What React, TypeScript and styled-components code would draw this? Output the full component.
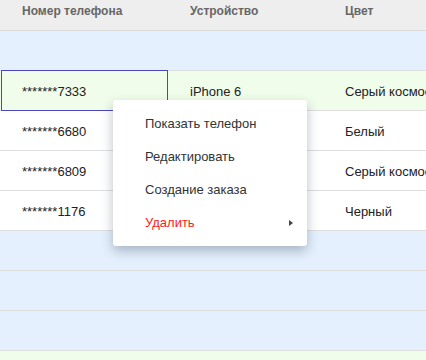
import React from 'react';
import styled, { createGlobalStyle } from 'styled-components';

const GlobalStyle = createGlobalStyle`
  html, body {
    margin: 0;
    padding: 0;
    overflow: hidden;
    background: #fff;
    font-family: "Liberation Sans", Arial, sans-serif;
  }
`;

const Page = styled.div`
  position: relative;
  width: 426px;
  height: 360px;
  overflow: hidden;
`;

const Table = styled.div`
  display: flex;
  flex-direction: column;
  width: 620px;
`;

const HeaderRow = styled.div`
  display: grid;
  grid-template-columns: 168px 155px 1fr;
  height: 30px;
  background: #eeeeee;
  border-bottom: 1px solid #dcdcdc;
`;

const HeaderCell = styled.div`
  padding: 3px 0 0 22px;
  font-size: 12px;
  line-height: 16px;
  font-weight: bold;
  color: #666;
  white-space: nowrap;
`;

const Row = styled.div<{ tone: 'blue' | 'green' | 'white' }>`
  display: grid;
  grid-template-columns: 168px 155px 1fr;
  height: 40px;
  box-sizing: border-box;
  border-bottom: 1px solid #dedede;
  background: ${({ tone }) =>
    tone === 'blue' ? '#e4f0fd' : tone === 'green' ? '#f1fdeb' : '#ffffff'};
`;

const Cell = styled.div<{ selected?: boolean }>`
  display: flex;
  align-items: center;
  padding: 1px 0 0 22px;
  font-size: 13px;
  color: #222;
  white-space: nowrap;
  box-sizing: border-box;
  ${({ selected }) =>
    selected
      ? `
    margin: -1px 0 -1px 1px;
    padding-left: 20px;
    border: 1px solid #4b48bd;
  `
      : ''}
`;

const Menu = styled.div`
  position: absolute;
  left: 113px;
  top: 100px;
  width: 194px;
  padding: 7px 0;
  background: #fff;
  border-radius: 3px;
  box-shadow: 0 5px 12px rgba(40, 55, 80, 0.32);
  display: flex;
  flex-direction: column;
`;

const MenuItem = styled.div<{ danger?: boolean }>`
  display: flex;
  align-items: center;
  justify-content: space-between;
  height: 33px;
  padding: 0 14px 0 32px;
  font-size: 13px;
  color: ${({ danger }) => (danger ? '#ff1a1a' : '#333')};
  cursor: pointer;
`;

const Arrow = styled.span`
  width: 0;
  height: 0;
  border-top: 3.5px solid transparent;
  border-bottom: 3.5px solid transparent;
  border-left: 4px solid #444;
`;

type Tone = 'blue' | 'green' | 'white';

const rows: { tone: Tone; phone?: string; device?: string; color?: string; selected?: boolean }[] = [
  { tone: 'blue' },
  { tone: 'green', phone: '*******7333', device: 'iPhone 6', color: 'Серый космос', selected: true },
  { tone: 'white', phone: '*******6680', device: 'iPhone 6', color: 'Белый' },
  { tone: 'white', phone: '*******6809', device: 'iPhone 6', color: 'Серый космос' },
  { tone: 'white', phone: '*******1176', device: 'iPhone 6', color: 'Черный' },
  { tone: 'blue' },
  { tone: 'blue' },
  { tone: 'blue' },
  { tone: 'green' },
];

export default function App() {
  return (
    <Page>
      <GlobalStyle />
      <Table>
        <HeaderRow>
          <HeaderCell>Номер телефона</HeaderCell>
          <HeaderCell>Устройство</HeaderCell>
          <HeaderCell>Цвет</HeaderCell>
        </HeaderRow>
        {rows.map((r, i) => (
          <Row key={i} tone={r.tone}>
            <Cell selected={r.selected}>{r.phone}</Cell>
            <Cell>{r.device}</Cell>
            <Cell>{r.color}</Cell>
          </Row>
        ))}
      </Table>
      <Menu>
        <MenuItem>Показать телефон</MenuItem>
        <MenuItem>Редактировать</MenuItem>
        <MenuItem>Создание заказа</MenuItem>
        <MenuItem danger>
          Удалить
          <Arrow />
        </MenuItem>
      </Menu>
    </Page>
  );
}
